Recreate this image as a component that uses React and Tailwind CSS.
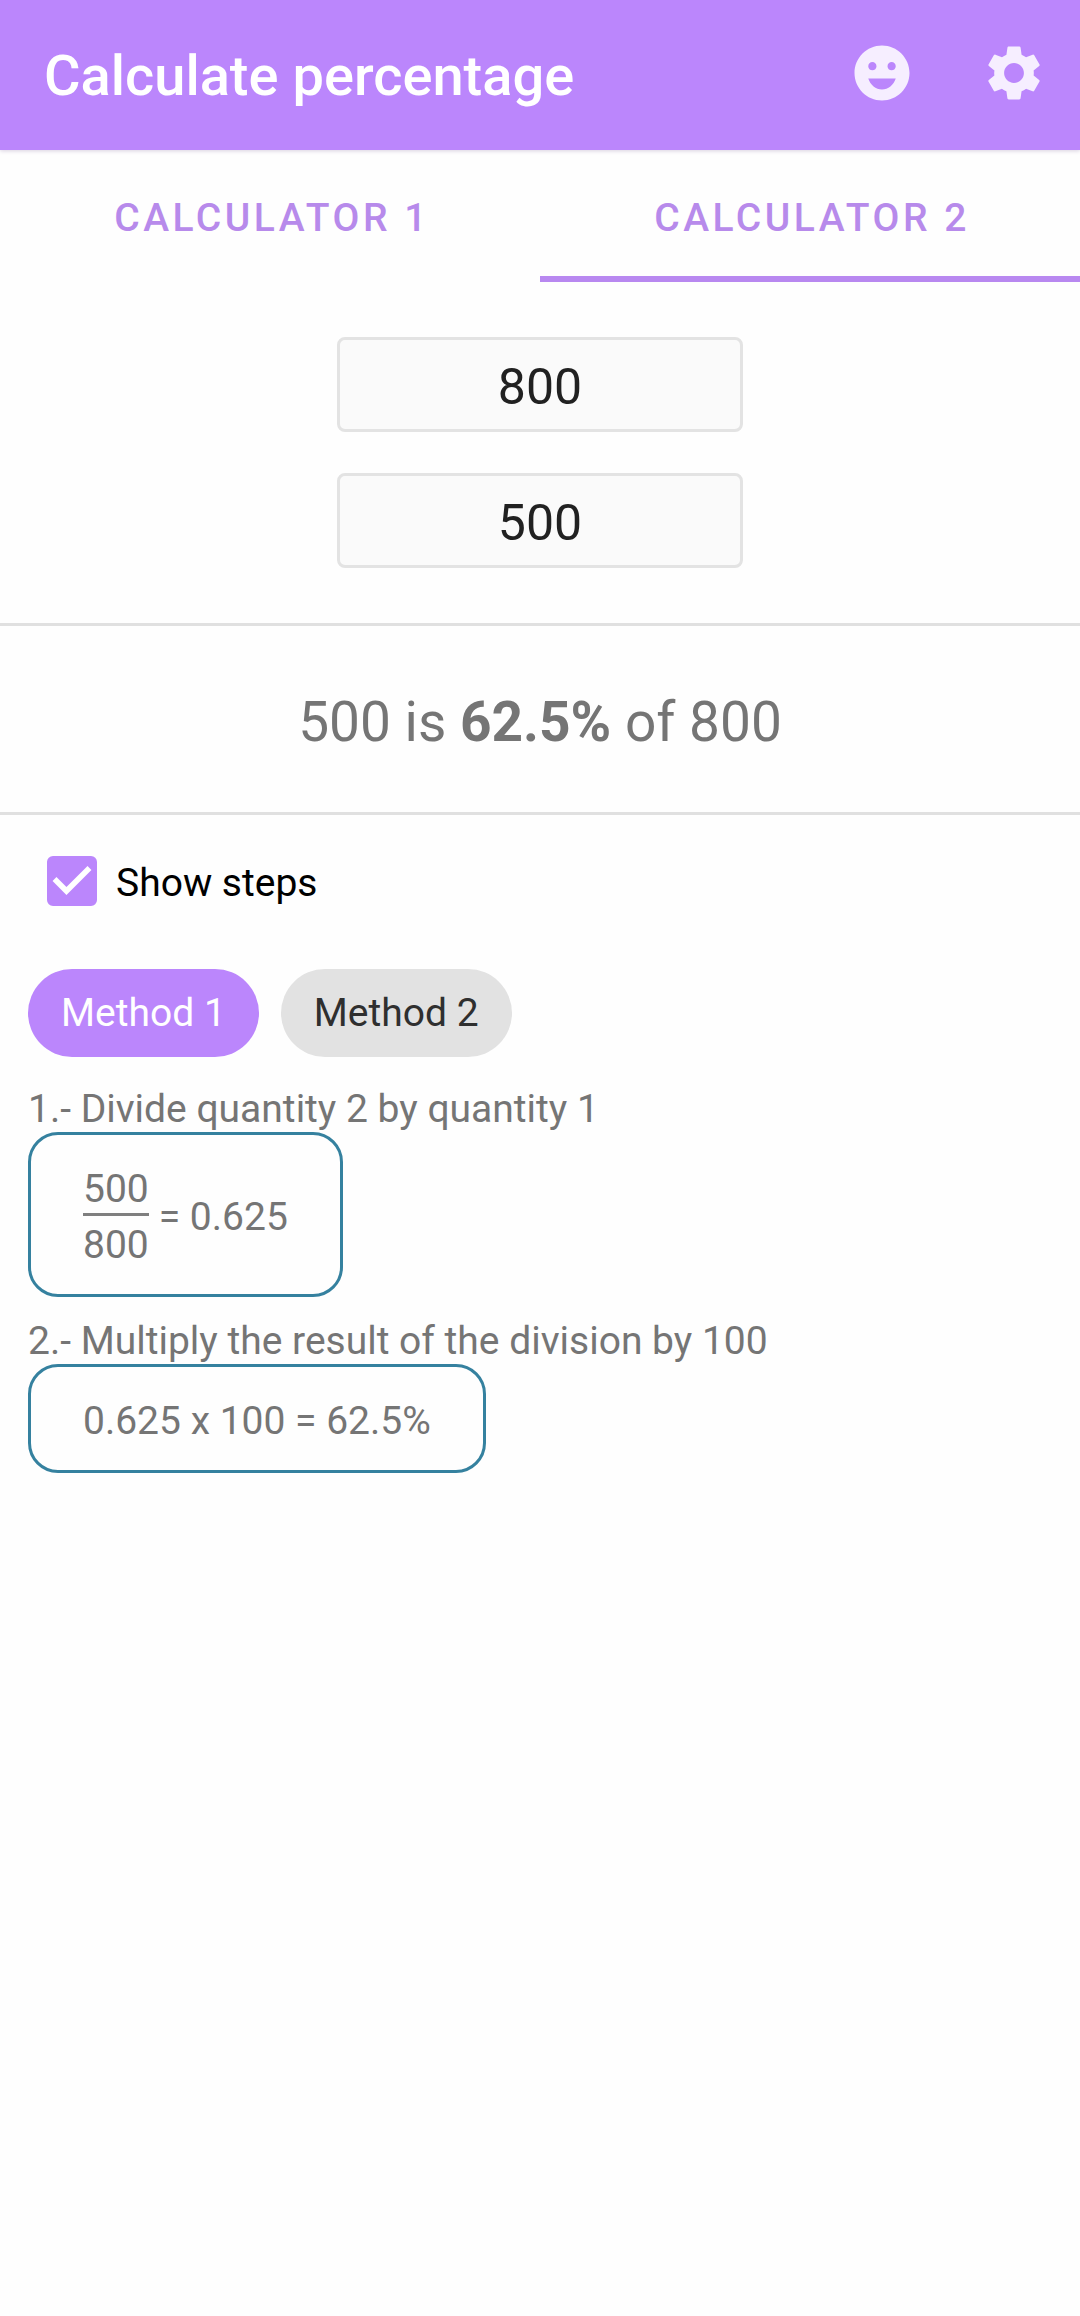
import { useState } from "react";
import { MdEmojiEmotions, MdSettings } from "react-icons/md";

const TABS = ["Calculator 1", "Calculator 2"];
const METHODS = ["Method 1", "Method 2"];

function round(n) {
  return Number.isFinite(n) ? Number(n.toFixed(4)) : 0;
}

function QuantityInput({ label, value, onChange }) {
  return (
    <input
      type="text"
      inputMode="decimal"
      aria-label={label}
      value={value}
      onChange={(e) => onChange(e.target.value)}
      className="h-[95px] w-[406px] rounded-lg border-3 border-[#e3e3e3] bg-[#fafafa] pt-1 text-center text-[50px] text-[#212121] outline-none"
    />
  );
}

function Fraction({ top, bottom }) {
  return (
    <span className="flex flex-col text-center">
      <span className="mb-px">{top}</span>
      <span className="mb-1.5 border-t-3 border-[#7f7f7f]" />
      <span>{bottom}</span>
    </span>
  );
}

function Step({ title, children }) {
  return (
    <li className="flex flex-col items-start">
      <p>{title}</p>
      <div className="flex items-center gap-[10px] rounded-[30px] border-3 border-[#35819f] px-[52px] pt-[31px] pb-[26px]">
        {children}
      </div>
    </li>
  );
}

export default function App() {
  const [tab, setTab] = useState(1);
  const [method, setMethod] = useState(0);
  const [showSteps, setShowSteps] = useState(true);
  const [first, setFirst] = useState("800");
  const [second, setSecond] = useState("500");

  const ratio = round(Number(second) / Number(first));
  const percent = round(ratio * 100);

  return (
    <div className="min-h-screen bg-[#fefefe] font-['Roboto',sans-serif] text-[39px] leading-[46px] text-[#757575]">
      <header className="flex h-[150px] items-center justify-between bg-[#bb86fc] pl-11 shadow-[0_1px_4px_#d8d0e0]">
        <h1 className="pt-0.5 text-[56px] leading-[66px] font-medium text-white">Calculate percentage</h1>
        <div className="flex pb-1 text-[#f6eeff]">
          <button type="button" aria-label="Feedback" className="flex w-[132px] justify-center">
            <MdEmojiEmotions className="size-[66px]" />
          </button>
          <button type="button" aria-label="Settings" className="flex w-[132px] justify-center">
            <MdSettings className="size-[66px]" />
          </button>
        </div>
      </header>

      <nav className="flex">
        {TABS.map((name, i) => (
          <button
            key={name}
            type="button"
            onClick={() => setTab(i)}
            className={`h-33 flex-1 border-b-6 pt-[10px] pl-1 font-medium tracking-[0.09em] text-[#b78aeb] uppercase ${
              tab === i ? "border-[#b888f0]" : "border-transparent"
            }`}
          >
            {name}
          </button>
        ))}
      </nav>

      <main>
        <section className="flex flex-col items-center gap-[41px] border-b-3 border-[#e0e0e0] py-[55px]">
          <QuantityInput label="Quantity 1" value={first} onChange={setFirst} />
          <QuantityInput label="Quantity 2" value={second} onChange={setSecond} />
        </section>

        <p className="border-b-3 border-[#e0e0e0] pt-[60px] pb-[54px] text-center text-[55px] leading-[72px]">
          {second} is <b>{percent}%</b> of {first}
        </p>

        <label className="flex h-33 items-center gap-[19px] pl-[47px] text-black">
          <span className="relative size-[50px]">
            <input
              type="checkbox"
              checked={showSteps}
              onChange={(e) => setShowSteps(e.target.checked)}
              className="peer block size-full appearance-none rounded-md border-6 border-[#757575] checked:border-[#bb86fc] checked:bg-[#bb86fc]"
            />
            <svg viewBox="3 3 18 18" className="pointer-events-none absolute inset-0 hidden fill-white peer-checked:block">
              <path d="M10 17l-5-5 1.41-1.41L10 14.17l7.59-7.59L19 8z" />
            </svg>
          </span>
          <span className="pt-1">Show steps</span>
        </label>

        {showSteps && (
          <div className="px-7 pt-[22px]">
            <div className="mb-[29px] flex gap-[22px]">
              {METHODS.map((name, i) => (
                <button
                  key={name}
                  type="button"
                  onClick={() => setMethod(i)}
                  className={`h-22 rounded-full px-[33px] ${
                    method === i ? "bg-[#bb86fc] text-white" : "bg-[#e2e2e2] text-[#2f2f2f]"
                  }`}
                >
                  {name}
                </button>
              ))}
            </div>

            {method === 0 ? (
              <ol className="flex flex-col gap-[21px]">
                <Step title="1.- Divide quantity 2 by quantity 1">
                  <Fraction top={second} bottom={first} />
                  <span>= {ratio}</span>
                </Step>
                <Step title="2.- Multiply the result of the division by 100">
                  <span>
                    {ratio} x 100 = {percent}%
                  </span>
                </Step>
              </ol>
            ) : (
              <ol className="flex flex-col gap-[21px]">
                <Step title="1.- Multiply quantity 2 by 100">
                  <span>
                    {second} x 100 = {round(Number(second) * 100)}
                  </span>
                </Step>
                <Step title="2.- Divide the result by quantity 1">
                  <Fraction top={round(Number(second) * 100)} bottom={first} />
                  <span>= {percent}%</span>
                </Step>
              </ol>
            )}
          </div>
        )}
      </main>
    </div>
  );
}
